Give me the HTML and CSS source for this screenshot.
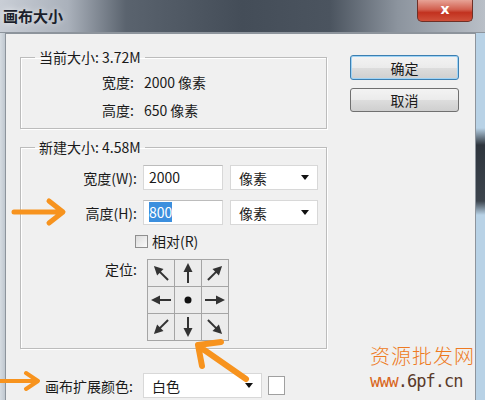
FILE: index.html
```html
<!DOCTYPE html>
<html lang="zh-CN">
<head>
  <meta charset="UTF-8" />
  <title>画布大小</title>
  <link rel="stylesheet" href="styles.css">
</head>
<body>

  <div class="window">
    <div class="titlebar">
      <span class="title">画布大小</span>
      <div class="close-btn">x</div>
    </div>

    <div class="main">
      <div class="frame-left"></div>

      <div class="content">
        <div class="left-col">

          <fieldset class="group group-current">
            <legend>当前大小: 3.72M</legend>
            <div class="info">
              <div class="info-row">宽度:<span class="info-value">2000 像素</span></div>
              <div class="info-row">高度:<span class="info-value">650 像素</span></div>
            </div>
          </fieldset>

          <fieldset class="group group-new">
            <legend>新建大小: 4.58M</legend>

            <div class="form-row">
              <label class="field-label">宽度(W):</label>
              <div class="text-box">2000</div>
              <div class="drop-box"><span>像素</span><i class="caret"></i></div>
            </div>

            <div class="form-row">
              <label class="field-label">高度(H):</label>
              <div class="text-box"><span class="selected">800</span></div>
              <div class="drop-box"><span>像素</span><i class="caret"></i></div>
            </div>

            <div class="check-row">
              <span class="check"></span>
              <span>相对(R)</span>
            </div>

            <div class="anchor-row">
              <label class="field-label anchor-label">定位:</label>
              <div class="anchor-grid">
                <div class="cell"><svg class="arr rot-nw" viewBox="0 0 26 26"><use href="#arrow"/></svg></div>
                <div class="cell"><svg class="arr rot-n" viewBox="0 0 26 26"><use href="#arrow"/></svg></div>
                <div class="cell"><svg class="arr rot-ne" viewBox="0 0 26 26"><use href="#arrow"/></svg></div>
                <div class="cell"><svg class="arr rot-w" viewBox="0 0 26 26"><use href="#arrow"/></svg></div>
                <div class="cell"><svg class="arr" viewBox="0 0 26 26"><circle cx="13" cy="13" r="3.5" fill="#111"/></svg></div>
                <div class="cell"><svg class="arr" viewBox="0 0 26 26"><use href="#arrow"/></svg></div>
                <div class="cell"><svg class="arr rot-sw" viewBox="0 0 26 26"><use href="#arrow"/></svg></div>
                <div class="cell"><svg class="arr rot-s" viewBox="0 0 26 26"><use href="#arrow"/></svg></div>
                <div class="cell"><svg class="arr rot-se" viewBox="0 0 26 26"><use href="#arrow"/></svg></div>
              </div>
            </div>
          </fieldset>

          <div class="extend-row">
            <label class="extend-label">画布扩展颜色:</label>
            <div class="drop-box extend-box"><span>白色</span><i class="caret"></i></div>
            <div class="swatch"></div>
          </div>
        </div>

        <div class="right-col">
          <button class="btn btn-default">确定</button>
          <button class="btn">取消</button>
        </div>
      </div>

      <div class="frame-right"></div>
    </div>

    <!-- orange pointer arrows drawn over the dialog -->
    <svg class="overlay" width="485" height="400" viewBox="0 0 485 400">
      <defs>
        <g id="arrow">
          <line x1="3" y1="13" x2="16" y2="13" stroke="#333" stroke-width="2"/>
          <polygon points="23,13 14,8.5 14,17.5" fill="#333"/>
        </g>
      </defs>
      <g stroke="#f7931e" stroke-linecap="round" stroke-linejoin="round" fill="none">
        <path d="M14 212 H62 M49 201 L63 212 L49 223" stroke-width="5"/>
        <path d="M0 381 H37 M26 373 L38 381 L26 389" stroke-width="4"/>
        <path d="M246 379 L200 347 M221 342 L198 345 L202 366" stroke-width="6"/>
      </g>
    </svg>

    <div class="watermark">
      <div class="wm-name">资源批发网</div>
      <div class="wm-url"><span class="wm-www">www</span>.6pf.cn</div>
    </div>
  </div>

</body>
</html>
```

FILE: styles.css
```css
* {
  margin: 0;
  padding: 0;
  box-sizing: border-box;
}

body {
  width: 485px;
  height: 400px;
  overflow: hidden;
  font-family: "Noto Sans CJK SC", "Liberation Sans", sans-serif;
  font-size: 14px;
  color: #1a1a1a;
}

.window {
  position: relative;
  width: 485px;
  height: 400px;
  display: flex;
  flex-direction: column;
  background-color: #c3cad2;
}

/* title bar */
.titlebar {
  height: 33px;
  display: flex;
  justify-content: space-between;
  align-items: flex-start;
  background: linear-gradient(to right, #c9ced6 0%, #aab1bb 14%, #5a636e 26%, #444d58 50%, #4b545f 68%, #8c949e 82%, #b9bfc7 100%);
  border-bottom: 1px solid #8d949c;
}

.title {
  margin: 6px 0 0 3px;
  font-size: 15px;
  font-weight: bold;
  line-height: 20px;
  color: #1b1f2c;
  text-shadow: 0 0 6px rgba(255, 255, 255, 0.7);
}

.close-btn {
  width: 56px;
  height: 22px;
  margin-right: 12px;
  border: 1px solid #6e3027;
  border-top: none;
  border-radius: 0 0 5px 5px;
  background: linear-gradient(to bottom, #e7a396 0%, #d2604f 45%, #c2321f 60%, #d0503a 100%);
  color: white;
  font-family: "DejaVu Sans", sans-serif;
  font-weight: bold;
  font-size: 14px;
  line-height: 18px;
  text-align: center;
}

/* body of the window */
.main {
  flex: 1;
  display: flex;
}

.frame-left {
  width: 5px;
  background: linear-gradient(to right, #d6dce2, #c0c8d0);
}

.content {
  flex: 1;
  display: flex;
  background-color: #f0f0f0;
  border: 1px solid #8d949c;
  border-bottom: none;
  padding: 15px 0 0 14px;
}

.frame-right {
  width: 9px;
  background: linear-gradient(to bottom, #b8d2e6 0, #b8d2e6 95px, #2e353d 112px, #3c444d 168px, #b8d2e6 182px, #b8d2e6 100%);
}

.left-col {
  width: 307px;
}

.right-col {
  display: flex;
  flex-direction: column;
  gap: 8px;
  margin: 6px 0 0 23px;
}

/* group boxes */
.group {
  border: 1px solid #bcbcbc;
  box-shadow: inset 1px 1px 0 #fff, 1px 1px 0 #fff;
  margin: 0;
}

.group legend {
  margin-left: 14px;
  padding: 0 4px;
  line-height: 16px;
  font-size: 14px;
}

.group-current {
  height: 80px;
  padding: 3px 0 3px 0;
}

.info {
  padding-left: 81px;
}

.info-row {
  height: 28px;
  line-height: 28px;
}

.info-value {
  margin-left: 10px;
}

.group-new {
  margin-top: 10px;
  height: 210px;
  padding: 10px 0 5px 0;
}

.form-row {
  display: flex;
  align-items: center;
  height: 25px;
  margin-bottom: 10px;
}

.field-label {
  width: 116px;
  margin-right: 6px;
  text-align: right;
}

.text-box {
  width: 80px;
  height: 25px;
  padding-left: 5px;
  background-color: #fff;
  border: 1px solid #d8d8d8;
  border-top-color: #bcbcbc;
  line-height: 23px;
}

.selected {
  background-color: #3b8fde;
  color: #fff;
}

.drop-box {
  width: 88px;
  height: 25px;
  margin-left: 7px;
  padding: 0 8px;
  display: flex;
  justify-content: space-between;
  align-items: center;
  background-color: #fff;
  border: 1px solid #d8d8d8;
}

.caret {
  border-left: 4px solid transparent;
  border-right: 4px solid transparent;
  border-top: 5px solid #111;
}

.check-row {
  display: flex;
  align-items: center;
  gap: 4px;
  height: 18px;
  margin: -3px 0 0 114px;
}

.check {
  width: 13px;
  height: 13px;
  border: 1px solid #8f8f8f;
  background: linear-gradient(135deg, #dcdcdc, #fafafa);
}

.anchor-row {
  display: flex;
  align-items: flex-start;
  margin-top: 9px;
}

.anchor-label {
  margin-right: 10px;
  line-height: 20px;
}

.anchor-grid {
  display: grid;
  grid-template-columns: repeat(3, 26px);
  grid-template-rows: repeat(3, 26px);
  gap: 1px;
  padding: 1px;
  background-color: #a5a5a5;
}

.cell {
  background-color: #ececec;
}

.arr {
  display: block;
  width: 26px;
  height: 26px;
}

.rot-n { transform: rotate(-90deg); }
.rot-s { transform: rotate(90deg); }
.rot-w { transform: rotate(180deg); }
.rot-nw { transform: rotate(-135deg); }
.rot-ne { transform: rotate(-45deg); }
.rot-sw { transform: rotate(135deg); }
.rot-se { transform: rotate(45deg); }

/* canvas extension colour */
.extend-row {
  display: flex;
  align-items: center;
  margin: 24px 0 0 25px;
}

.extend-label {
  width: 98px;
}

.extend-box {
  width: 119px;
  margin-left: 0;
}

.swatch {
  width: 17px;
  height: 19px;
  margin-left: 6px;
  background-color: #fff;
  border: 1px solid #a0a0a0;
}

/* buttons */
.btn {
  width: 109px;
  height: 24px;
  font-family: "Noto Sans CJK SC", sans-serif;
  font-size: 14px;
  color: #1a1a1a;
  border: 1px solid #707070;
  border-radius: 3px;
  background: linear-gradient(to bottom, #f3f3f3 0%, #ebebeb 50%, #dddddd 51%, #cfcfcf 100%);
}

.btn-default {
  height: 25px;
  border-color: #3c7fb1;
  box-shadow: inset 0 0 0 1px #9fd3f5;
}

/* overlays */
.overlay {
  position: absolute;
  left: 0;
  top: 0;
  pointer-events: none;
}

.watermark {
  position: absolute;
  left: 370px;
  top: 342px;
  width: 106px;
}

.wm-name {
  font-size: 20px;
  font-weight: 300;
  letter-spacing: 1px;
  color: #ee7a22;
  line-height: 28px;
}

.wm-url {
  font-family: "DejaVu Sans Mono", monospace;
  font-size: 17px;
  letter-spacing: -1px;
  color: #5a3a2a;
  line-height: 22px;
}

.wm-www {
  color: #d9661c;
}
```
